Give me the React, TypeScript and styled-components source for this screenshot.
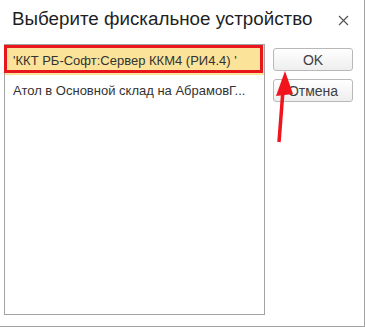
import React from "react";
import styled, { createGlobalStyle } from "styled-components";

const Global = createGlobalStyle`
  html, body { margin: 0; padding: 0; background: #fff; }
  body { font-family: Arial, "Liberation Sans", sans-serif; }
`;

const Window = styled.div`
  position: relative;
  box-sizing: border-box;
  width: 365px;
  height: 327px;
  background: #fff;
  border-right: 1px solid #a3a3a3;
  border-bottom: 1px solid #a3a3a3;
  display: flex;
  flex-direction: column;
`;

const Header = styled.div`
  height: 44px;
  display: flex;
  align-items: flex-start;
  justify-content: space-between;
  padding: 8px 12px 0 12px;
  box-sizing: border-box;
`;

const Title = styled.h1`
  margin: 0;
  font-size: 18.8px;
  font-weight: normal;
  color: #1f1f1f;
  font-family: Arial, "Liberation Sans", sans-serif;
`;

const Close = styled.button`
  border: 0;
  background: none;
  padding: 0;
  margin: 7px 3px 0 0;
  width: 11px;
  height: 11px;
  display: flex;
`;

const Body = styled.div`
  display: flex;
  gap: 8px;
  padding-left: 4px;
`;

const List = styled.div`
  box-sizing: border-box;
  width: 261px;
  height: 271px;
  border: 1px solid #a3a3a3;
  display: flex;
  flex-direction: column;
`;

const Row = styled.div<{ $selected?: boolean }>`
  position: relative;
  height: 30px;
  display: flex;
  align-items: center;
  padding-left: 8px;
  font-size: 13px;
  color: #333;
  white-space: nowrap;
  background: ${(p) => (p.$selected ? "#fbe39a" : "transparent")};
`;

const Highlight = styled.div`
  position: absolute;
  left: -1px;
  top: 0;
  right: 1px;
  height: 28px;
  border: 3px solid #e8171c;
  box-sizing: border-box;
  pointer-events: none;
`;

const Buttons = styled.div`
  display: flex;
  flex-direction: column;
  gap: 8px;
  padding-top: 4px;
`;

const Button = styled.button`
  box-sizing: border-box;
  width: 80px;
  height: 23px;
  border: 1px solid #b8b8b8;
  border-radius: 3px;
  background: linear-gradient(#ffffff, #eeeeee);
  font-family: Arial, "Liberation Sans", sans-serif;
  font-size: 14px;
  color: #404040;
  padding: 0;
`;

const Arrow = styled.svg`
  position: absolute;
  left: 0;
  top: 0;
  pointer-events: none;
`;

export default function App() {
  return (
    <>
      <Global />
      <Window>
        <Header>
          <Title>Выберите фискальное устройство</Title>
          <Close aria-label="close">
            <svg width="11" height="11" viewBox="0 0 11 11">
              <path d="M1 1 L10 10 M10 1 L1 10" stroke="#555" strokeWidth="1.2" />
            </svg>
          </Close>
        </Header>
        <Body>
          <List>
            <Row $selected>
              'ККТ РБ-Софт:Сервер ККМ4 (РИ4.4) '
              <Highlight />
            </Row>
            <Row>Атол в Основной склад на АбрамовГ...</Row>
          </List>
          <Buttons>
            <Button>OK</Button>
            <Button>Отмена</Button>
          </Buttons>
        </Body>
        <Arrow width="365" height="327" viewBox="0 0 365 327">
          <path d="M279 142 L283 90" stroke="#f0141c" strokeWidth="3.5" fill="none" />
          <path d="M285 71 L276 96 L293 94 Z" fill="#f0141c" />
        </Arrow>
      </Window>
    </>
  );
}
